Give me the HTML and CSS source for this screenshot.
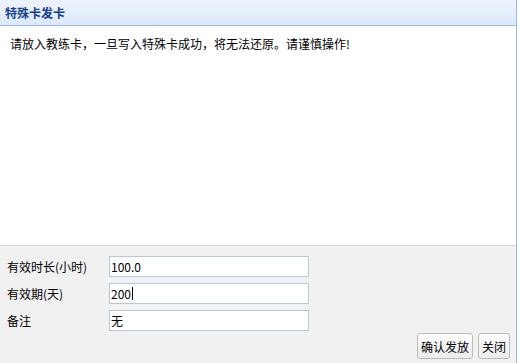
FILE: index.html
```html
<!DOCTYPE html>
<html lang="zh-CN">
<head>
<meta charset="utf-8">
<title>特殊卡发卡</title>
<link rel="stylesheet" href="styles.css">
</head>
<body>
<div class="panel">
  <div class="header">特殊卡发卡</div>
  <div class="content">
    <p class="msg">请放入教练卡，一旦写入特殊卡成功，将无法还原。请谨慎操作!</p>
  </div>
  <div class="footer">
    <div class="form">
      <div class="row"><span class="label">有效时长(小时)</span><div class="field">100.0</div></div>
      <div class="row"><span class="label">有效期(天)</span><div class="field">200<span class="caret"></span></div></div>
      <div class="row"><span class="label">备注</span><div class="field">无</div></div>
    </div>
    <div class="actions">
      <button class="btn">确认发放</button>
      <button class="btn">关闭</button>
    </div>
  </div>
</div>
</body>
</html>
```
FILE: styles.css
```css
html, body {
  margin: 0;
  padding: 0;
  background: #ffffff;
}
body {
  font-family: "Microsoft YaHei", "Noto Sans CJK SC", sans-serif;
  font-size: 12px;
  color: #000;
  width: 519px;
  height: 363px;
  overflow: hidden;
}
.panel {
  width: 517px;
  height: 363px;
  border-right: 1px solid #99bbe8;
  display: flex;
  flex-direction: column;
  box-sizing: border-box;
}
.header {
  height: 25px;
  line-height: 25px;
  padding-left: 5px;
  border-bottom: 1px solid #99bbe8;
  background: linear-gradient(#eef4fd, #dce8f9);
  color: #15428b;
  font-weight: bold;
  font-size: 12px;
}
.content {
  height: 219px;
  padding: 10px 10px;
  box-sizing: border-box;
  background: #fff;
}
.msg {
  margin: 0;
  line-height: 16px;
}
.footer {
  flex: 1;
  border-top: 1px solid #d4d4d4;
  background: #f1f1f1;
  padding: 10px 6px 0 7px;
  display: flex;
  flex-direction: column;
}
.form {
  display: flex;
  flex-direction: column;
  gap: 6px;
}
.row {
  display: flex;
  align-items: center;
  height: 21px;
}
.label {
  width: 102px;
  line-height: 21px;
}
.field {
  width: 200px;
  height: 21px;
  box-sizing: border-box;
  border: 1px solid #b5c8de;
  background: #fff;
  padding: 0 1px;
  line-height: 19px;
  display: flex;
  align-items: center;
}
.caret {
  display: inline-block;
  width: 1px;
  height: 13px;
  background: #000;
  margin-left: 1px;
}
.actions {
  display: flex;
  justify-content: flex-end;
  gap: 5px;
  margin-top: 2px;
}
.btn {
  font-family: inherit;
  font-size: 12px;
  color: #000;
  height: 26px;
  padding: 0 3px;
  border: 1px solid #bcbcbc;
  border-radius: 3px;
  background: linear-gradient(#fdfdfd, #ececec);
}
```
